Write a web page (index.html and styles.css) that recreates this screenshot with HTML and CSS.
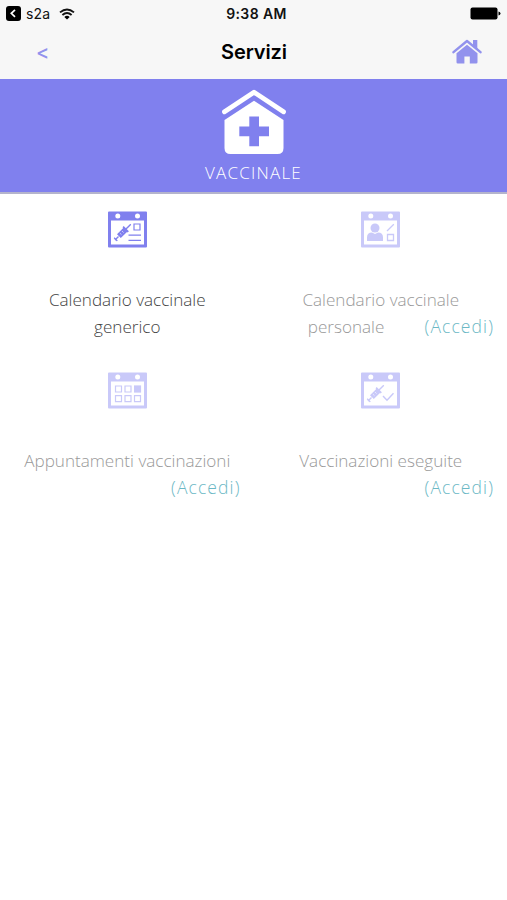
FILE: index.html
```
<!DOCTYPE html>
<html lang="it">
<head>
    <meta charset="UTF-8">
    <meta name="viewport" content="width=device-width, initial-scale=1.0">
    <title>Servizi</title>
    <link rel="stylesheet" href="styles.css">
</head>
<body>
    <header class="header">
        <div class="status-bar">
            <div class="status-left">
                <svg class="back-app" viewBox="0 0 15 15" width="15" height="15">
                    <rect width="15" height="15" rx="3"/>
                    <path d="M9 3.8L5.3 7.3L9 10.8" fill="none" stroke="#fff" stroke-width="1.7"/>
                </svg>
                <span class="app-name">s2a</span>
                <svg class="wifi" viewBox="0 0 16 12" width="16" height="12">
                    <path d="M1 4.4Q8 -1.6 15 4.4M3.4 7Q8 3.1 12.6 7" fill="none" stroke="#111" stroke-width="1.9"/>
                    <path d="M5.3 8.9Q8 6.8 10.7 8.9L8 11.6Z"/>
                </svg>
            </div>
            <span class="time">9:38 AM</span>
            <svg class="battery" viewBox="0 0 31 13" width="31" height="13">
                <rect x="0.5" y="0.5" width="27" height="12" rx="2"/>
                <path d="M28.5 4.5Q30.5 5 30.5 6.5Q30.5 8 28.5 8.5Z"/>
            </svg>
        </div>
        <nav class="navbar">
            <a class="nav-back" aria-label="Indietro">&lt;</a>
            <h1>Servizi</h1>
            <svg class="nav-home" viewBox="0 0 30 25" width="30" height="25">
                <path d="M1.5 13.2L15 2L28.5 13.2" fill="none" stroke="#9292ed" stroke-width="2.4" stroke-linecap="round" stroke-linejoin="round"/>
                <path d="M21 1H25.3V11L21 7.4ZM15 5.7L25.5 14.3V23.2Q25.5 24.5 24.2 24.5H17.8V17.5H12.4V24.5H5.8Q4.5 24.5 4.5 23.2V14.3Z" fill="#9292ed"/>
            </svg>
        </nav>
    </header>

    <section class="banner">
        <svg viewBox="0 0 66 66" width="66" height="66">
            <path d="M3.5 22.8L33 3.2L62.5 22.8" fill="none" stroke="#fff" stroke-width="4.8" stroke-linecap="round" stroke-linejoin="round"/>
            <path d="M33 11.8L62.5 31V59Q62.5 65 56.5 65H9.5Q3.5 65 3.5 59V31Z" fill="#fff"/>
            <path d="M28.3 27.6H38V37.6H48V47.2H38V57.2H28.3V47.2H18.3V37.6H28.3Z" fill="#8080ee"/>
        </svg>
        <h2>VACCINALE</h2>
    </section>

    <!-- Cornice e siringa comuni alle icone -->
    <svg class="symbols">
        <symbol id="calendar" viewBox="0 0 39 37">
            <path fill-rule="evenodd" d="M1 0.5H38Q39 0.5 39 1.5V35.5Q39 36.5 38 36.5H1Q0 36.5 0 35.5V1.5Q0 0.5 1 0.5ZM3 9.5V33.5H36V9.5ZM7.3 5.1A2.5 2.5 0 1 0 12.3 5.1A2.5 2.5 0 1 0 7.3 5.1ZM27 5.1A2.5 2.5 0 1 0 32 5.1A2.5 2.5 0 1 0 27 5.1Z"/>
        </symbol>
        <symbol id="syringe" viewBox="0 0 18 18">
            <path d="M1.5 16.5L5 13M0.6 14.2L3.8 17.4M12.5 5.5L17.3 0.7" fill="none" stroke="currentColor" stroke-width="1.4"/>
            <path d="M10.2 2.6L15.4 7.8L14.2 9L13.5 8.4L7.3 14.5L3.5 10.7L9.7 4.5L9 3.8Z"/>
            <path d="M6.3 9.5L8 11.2M8.4 7.4L10.1 9.1" fill="none" stroke="#fff" stroke-width="0.6"/>
        </symbol>
    </svg>

    <main class="services">
        <a class="service">
            <svg class="icon" viewBox="0 0 39 37">
                <use href="#calendar" width="39" height="37"/>
                <use href="#syringe" x="5.5" y="12.5" width="18" height="18"/>
                <path d="M26 13H32V19H26ZM20.5 24.2H33M20.5 29.3H33" fill="none" stroke="currentColor" stroke-width="1.2"/>
            </svg>
            <div class="label">Calendario vaccinale<br>generico</div>
        </a>
        <a class="service disabled">
            <svg class="icon" viewBox="0 0 39 37">
                <use href="#calendar" width="39" height="37"/>
                <circle cx="14" cy="17" r="4.5"/>
                <path d="M6 30V26.5Q6 21.5 11 21.5L14 23L17 21.5Q22 21.5 22 26.5V30Z"/>
                <path d="M26.5 23.5H32.5V29.5H26.5ZM26 20L32.8 13.2" fill="none" stroke="currentColor" stroke-width="1.3"/>
            </svg>
            <div class="label"><span>Calendario vaccinale</span> <span>personale</span> <span class="login">(Accedi)</span></div>
        </a>
        <a class="service disabled">
            <svg class="icon" viewBox="0 0 39 37">
                <use href="#calendar" width="39" height="37"/>
                <path d="M7.5 14H13.5V20H7.5ZM17 14H23V20H17ZM7.5 23.7H13.5V29.7H7.5ZM17 23.7H23V29.7H17ZM26.5 23.7H32.5V29.7H26.5Z" fill="none" stroke="currentColor" stroke-width="1.2"/>
                <path d="M26 13.4H33.1V20.6H26Z"/>
            </svg>
            <div class="label">Appuntamenti vaccinazioni <span class="login">(Accedi)</span></div>
        </a>
        <a class="service disabled">
            <svg class="icon" viewBox="0 0 39 37">
                <use href="#calendar" width="39" height="37"/>
                <use href="#syringe" x="5.5" y="12.5" width="18" height="18"/>
                <path d="M22 24L26 28.2L32.5 21.3" fill="none" stroke="currentColor" stroke-width="1.4"/>
            </svg>
            <div class="label">Vaccinazioni eseguite <span class="login">(Accedi)</span></div>
        </a>
    </main>
</body>
</html>
```
FILE: styles.css
```
* {
    box-sizing: border-box;
}
body {
    margin: 0;
    min-height: 100vh;
    background-color: #fff;
    font-family: "Open Sans", sans-serif;
}
svg {
    display: block;
}
.header {
    height: 79px;
    background-color: #f7f7f7;
    font-family: Inter, sans-serif;
    color: #111;
}
.status-bar {
    display: grid;
    grid-template-columns: 1fr auto 1fr;
    align-items: center;
    height: 27px;
    padding: 0 6px 0 6px;
}
.status-left {
    display: flex;
    align-items: center;
}
.app-name {
    margin: 0 9px 0 5px;
    font-size: 14px;
    letter-spacing: 0.2px;
}
.time {
    margin-left: 6px;
    font-size: 14px;
    font-weight: 600;
    letter-spacing: 0.4px;
}
.battery {
    justify-self: end;
}
.navbar {
    display: grid;
    grid-template-columns: 1fr auto 1fr;
    align-items: center;
    height: 50px;
    padding: 0 25px 0 36px;
}
.nav-back {
    color: #9292ed;
    font-size: 20px;
    font-weight: 500;
}
.navbar h1 {
    margin: 0 0 0 -10px;
    color: #000;
    font-size: 20px;
    font-weight: 600;
    letter-spacing: -0.1px;
}
.nav-home {
    justify-self: end;
    margin-bottom: 2px;
}
.banner {
    display: flex;
    flex-direction: column;
    align-items: center;
    height: 115px;
    padding-top: 10px;
    background-color: #8080ee;
    border-bottom: 2px solid #b4b4cc;
    color: #fff;
}
.banner h2 {
    margin: 6px 0 0;
    font-size: 17px;
    font-weight: 300;
    line-height: 24px;
    letter-spacing: 1.2px;
}
.symbols {
    display: none;
}
.services {
    display: grid;
    grid-template-columns: 1fr 1fr;
    padding-top: 17px;
}
.service {
    height: 161px;
    padding: 0 13px 0 14px;
    color: #444;
}
.icon {
    width: 39px;
    height: 37px;
    margin: 0 auto;
    color: #8080ee;
    fill: currentColor;
}
.label {
    margin-top: 38px;
    font-size: 17.1px;
    font-weight: 300;
    line-height: 27px;
    text-align: center;
}
.login {
    float: right;
    font-size: 17.5px;
    letter-spacing: 1.1px;
}
.disabled .icon {
    color: #c9c9f9;
}
.disabled .label {
    color: #999;
}
.disabled .login {
    color: #6bb8c5;
}
```
